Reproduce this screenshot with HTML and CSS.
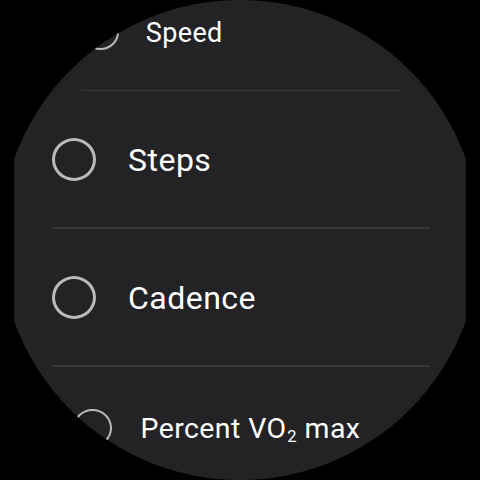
FILE: index.html
```html
<!DOCTYPE html>
<html>
<head>
<meta charset="utf-8">
<link rel="stylesheet" href="styles.css">
</head>
<body>
<div class="screen">
  <div class="list">
    <div class="item s-top">
      <span class="radio"></span>
      <span class="label">Speed</span>
    </div>
    <div class="item">
      <span class="radio"></span>
      <span class="label">Steps</span>
    </div>
    <div class="item">
      <span class="radio"></span>
      <span class="label">Cadence</span>
    </div>
    <div class="item s-bottom">
      <span class="radio"></span>
      <span class="label">Percent VO<sub class="sub">2</sub> max</span>
    </div>
  </div>
</div>
</body>
</html>
```
FILE: styles.css
```css
html, body {
  margin: 0;
  padding: 0;
  background: #000;
}

body {
  width: 480px;
  height: 480px;
  overflow: hidden;
  font-family: Roboto, "Noto Sans", "Liberation Sans", sans-serif;
}

.screen {
  width: 452px;
  height: 480px;
  margin-left: 14px;
  background: #232326;
  clip-path: circle(240px at 226px 240px);
  overflow: hidden;
}

.list {
  display: flex;
  flex-direction: column;
  align-items: center;
  margin-top: -25.3px;
  padding-left: 2px;
}

.item {
  --s: 1;
  box-sizing: border-box;
  width: calc(378px * var(--s));
  height: calc(138px * var(--s));
  flex: none;
  display: flex;
  align-items: center;
  gap: calc(32px * var(--s));
  border-bottom: calc(2px * var(--s)) solid #37373b;
}

.s-top {
  --s: 0.843;
}

.s-bottom {
  --s: 0.889;
}

.radio {
  box-sizing: border-box;
  flex: none;
  width: calc(44px * var(--s));
  height: calc(43px * var(--s));
  border: calc(3px * var(--s)) solid #bababa;
  border-radius: 50%;
}

.label {
  color: #fff;
  font-size: calc(32px * var(--s));
  letter-spacing: 0.015em;
  white-space: nowrap;
  padding-top: calc(2px * var(--s));
}

.sub {
  font-size: 0.58em;
  vertical-align: -0.27em;
  margin-left: 0.05em;
}
```
